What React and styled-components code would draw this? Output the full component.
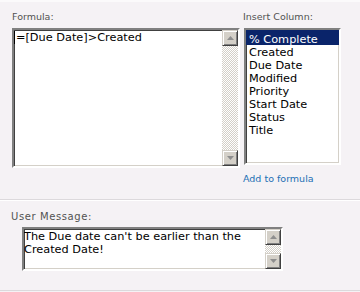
import styled, { createGlobalStyle } from "styled-components";

const GlobalStyle = createGlobalStyle`
  html, body {
    margin: 0;
    padding: 0;
  }
  body {
    background: #f5f2f5;
    font-family: "DejaVu Sans", Verdana, sans-serif;
  }
`;

const columns = [
  "% Complete",
  "Created",
  "Due Date",
  "Modified",
  "Priority",
  "Start Date",
  "Status",
  "Title",
];

function ScrollArrow({ dir }) {
  return (
    <svg width="7" height="4" viewBox="0 0 7 4">
      <path
        d={dir === "up" ? "M3.5 0 L7 4 L0 4 Z" : "M0 0 L7 0 L3.5 4 Z"}
        fill="#8e8e8e"
      />
    </svg>
  );
}

function ScrollBar() {
  return (
    <Track>
      <ScrollButton>
        <ScrollArrow dir="up" />
      </ScrollButton>
      <ScrollButton>
        <ScrollArrow dir="down" />
      </ScrollButton>
    </Track>
  );
}

function App() {
  return (
    <>
      <GlobalStyle />
      <TopSection>
        <FormulaColumn>
          <Label>Formula:</Label>
          <Field $width={228} $height={140}>
            <FieldText>
              <Caret />=[Due Date]&gt;Created
            </FieldText>
            <ScrollBar />
          </Field>
        </FormulaColumn>

        <InsertColumn>
          <Label>Insert Column:</Label>
          <ListBox>
            {columns.map((name, i) => (
              <ListItem key={name} $selected={i === 0}>
                {name}
              </ListItem>
            ))}
          </ListBox>
          <AddLink href="#">Add to formula</AddLink>
        </InsertColumn>
      </TopSection>

      <BottomSection>
        <MessageLabel>User Message:</MessageLabel>
        <MessageField $width={261} $height={44}>
          <FieldText>The Due date can't be earlier than the Created Date!</FieldText>
          <ScrollBar />
        </MessageField>
      </BottomSection>
    </>
  );
}

const TopSection = styled.div`
  box-sizing: border-box;
  height: 200px;
  display: flex;
  gap: 3px;
  padding: 9px 0 0 12px;
  border-top: 2px solid #fbfafb;
  border-bottom: 1px solid #dcd9dc;
`;

const FormulaColumn = styled.div`
  display: flex;
  flex-direction: column;
  width: 228px;
`;

const InsertColumn = styled.div`
  display: flex;
  flex-direction: column;
  align-items: flex-start;
`;

const Label = styled.div`
  font-size: 9.5px;
  line-height: 12px;
  height: 12px;
  color: #525252;
  margin-bottom: 5px;
  white-space: nowrap;
`;

const Field = styled.div`
  box-sizing: border-box;
  display: flex;
  width: ${(p) => p.$width}px;
  height: ${(p) => p.$height}px;
  background: #fff;
  border: 2px solid;
  border-color: #808080 #ffffff #ffffff #808080;
  box-shadow: inset 1px 1px 0 #404040, inset -1px -1px 0 #d4d0c8;
`;

const FieldText = styled.div`
  flex: 1;
  padding: 1px 0 0;
  font-size: 11.3px;
  line-height: 13px;
  color: #000;
  overflow: hidden;
`;

const Caret = styled.span`
  display: inline-block;
  width: 1px;
  height: 13px;
  margin-right: 1px;
  vertical-align: -3px;
  background: #000;
`;

const Track = styled.div`
  display: flex;
  flex-direction: column;
  justify-content: space-between;
  width: 16px;
  flex-shrink: 0;
  background: repeating-conic-gradient(#d4d0c8 0 25%, #ffffff 0 50%) 0 0 / 2px
    2px;
`;

const ScrollButton = styled.div`
  box-sizing: border-box;
  width: 16px;
  height: 16px;
  display: flex;
  align-items: center;
  justify-content: center;
  background: #d4d0c8;
  border: 1px solid;
  border-color: #d4d0c8 #404040 #404040 #d4d0c8;
  box-shadow: inset 1px 1px 0 #ffffff, inset -1px -1px 0 #808080;
`;

const ListBox = styled.div`
  box-sizing: border-box;
  width: 97px;
  height: 137px;
  margin-left: 1px;
  padding: 1px 0 0;
  background: #fff;
  border: 2px solid;
  border-color: #808080 #ffffff #ffffff #808080;
  box-shadow: inset 1px 1px 0 #404040, inset -1px -1px 0 #d4d0c8;
`;

const ListItem = styled.div`
  box-sizing: border-box;
  height: 13px;
  font-size: 11.3px;
  line-height: 9px;
  padding: 4px 0 0 3px;
  white-space: nowrap;
  color: ${(p) => (p.$selected ? "#ffffff" : "#000000")};
  background: ${(p) => (p.$selected ? "#0a246a" : "transparent")};
  box-shadow: ${(p) =>
    p.$selected ? "0 -1px 0 #0a246a, 0 1px 0 #0a246a" : "none"};
`;

const AddLink = styled.a`
  margin-top: 8px;
  font-size: 9.5px;
  line-height: 12px;
  color: #2370b4;
  text-decoration: none;
  white-space: nowrap;
`;

const BottomSection = styled.div`
  box-sizing: border-box;
  height: 91px;
  padding: 10px 0 0 11px;
  border-top: 1px solid #ffffff;
  border-bottom: 1px solid #dcd9dc;
`;

const MessageLabel = styled(Label)`
  font-size: 10px;
  letter-spacing: 0.6px;
  margin-bottom: 4px;
`;

const MessageField = styled(Field)`
  margin-left: 11px;
`;

export default App;
